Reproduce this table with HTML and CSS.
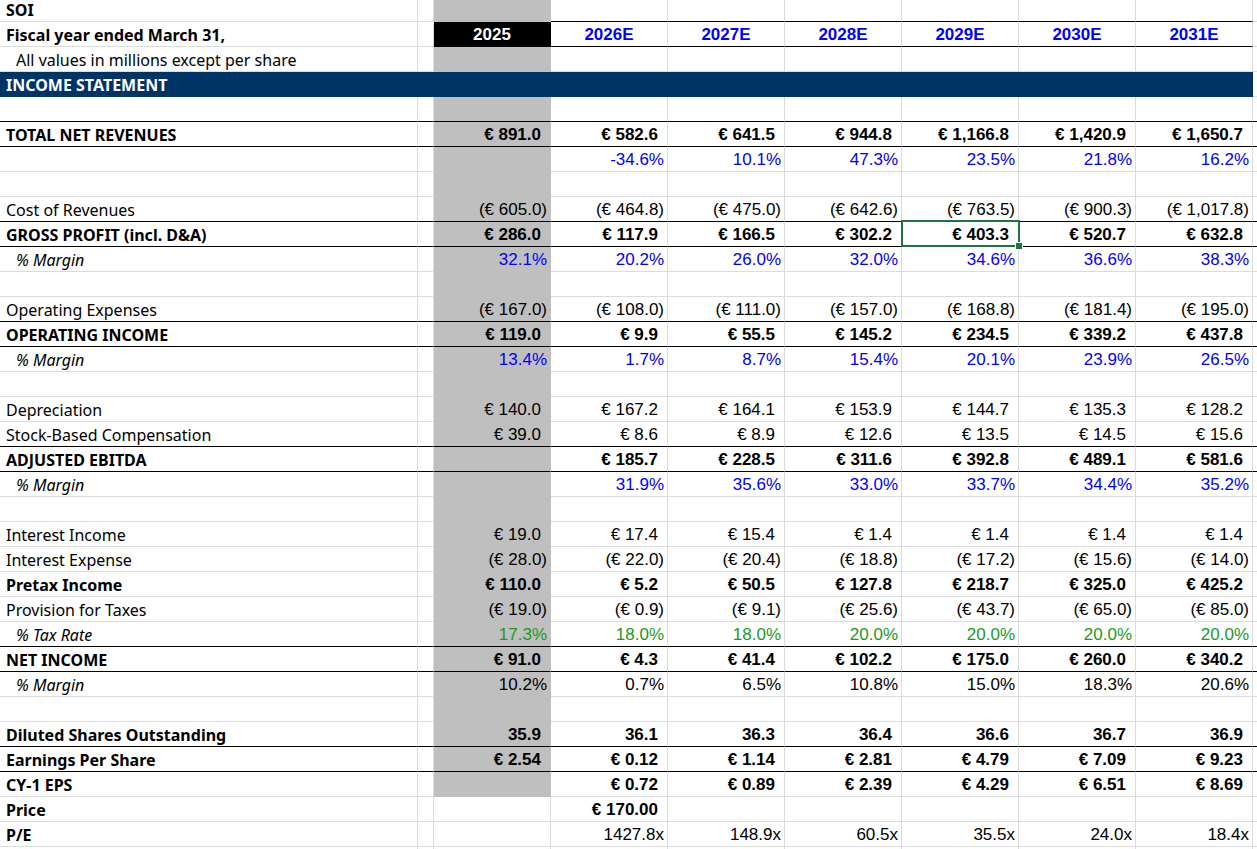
FILE: index.html
```html
<!DOCTYPE html>
<html>
<head>
<meta charset="utf-8">
<link rel="stylesheet" href="styles.css">
</head>
<body>
<table class="sheet">
<colgroup>
<col class="w-a"><col class="w-b"><col class="w-n"><col class="w-n"><col class="w-n"><col class="w-n"><col class="w-n"><col class="w-n"><col class="w-n"><col class="w-j">
</colgroup>
<tbody>
<tr class="r1 bold"><td class="a">SOI</td><td class="b"></td><td class="c"></td><td class="tb"></td><td class="tb"></td><td class="tb"></td><td class="tb"></td><td class="tb"></td><td class="tb"></td><td class="j"></td></tr>
<tr class="bold yr"><td class="a">Fiscal year ended March 31,</td><td class="b"></td><td class="c black">2025</td><td class="yb">2026E</td><td class="yb">2027E</td><td class="yb">2028E</td><td class="yb">2029E</td><td class="yb">2030E</td><td class="yb">2031E</td><td class="j"></td></tr>
<tr><td class="a ind">All values in millions except per share</td><td class="b"></td><td class="c"></td><td></td><td></td><td></td><td></td><td></td><td></td><td class="j"></td></tr>
<tr class="nav bold"><td class="a">INCOME STATEMENT</td><td class="b"></td><td class="c"></td><td></td><td></td><td></td><td></td><td></td><td></td><td class="j"></td></tr>
<tr class="ln"><td class="a"></td><td class="b"></td><td class="c"></td><td></td><td></td><td></td><td></td><td></td><td></td><td class="j"></td></tr>
<tr class="bold ln"><td class="a">TOTAL NET REVENUES</td><td class="b"></td><td class="c p">€ 891.0</td><td class="p">€ 582.6</td><td class="p">€ 641.5</td><td class="p">€ 944.8</td><td class="p">€ 1,166.8</td><td class="p">€ 1,420.9</td><td class="p">€ 1,650.7</td><td class="j"></td></tr>
<tr class="blue"><td class="a"></td><td class="b"></td><td class="c"></td><td>-34.6%</td><td>10.1%</td><td>47.3%</td><td>23.5%</td><td>21.8%</td><td>16.2%</td><td class="j"></td></tr>
<tr><td class="a"></td><td class="b"></td><td class="c"></td><td></td><td></td><td></td><td></td><td></td><td></td><td class="j"></td></tr>
<tr class="ln"><td class="a">Cost of Revenues</td><td class="b"></td><td class="c">(€ 605.0)</td><td>(€ 464.8)</td><td>(€ 475.0)</td><td>(€ 642.6)</td><td>(€ 763.5)</td><td>(€ 900.3)</td><td>(€ 1,017.8)</td><td class="j"></td></tr>
<tr class="bold ln"><td class="a">GROSS PROFIT (incl. D&amp;A)</td><td class="b"></td><td class="c p">€ 286.0</td><td class="p">€ 117.9</td><td class="p">€ 166.5</td><td class="p">€ 302.2</td><td class="p sel">€ 403.3</td><td class="p">€ 520.7</td><td class="p">€ 632.8</td><td class="j"></td></tr>
<tr class="blue"><td class="a ind it">% Margin</td><td class="b"></td><td class="c">32.1%</td><td>20.2%</td><td>26.0%</td><td>32.0%</td><td>34.6%</td><td>36.6%</td><td>38.3%</td><td class="j"></td></tr>
<tr><td class="a"></td><td class="b"></td><td class="c"></td><td></td><td></td><td></td><td></td><td></td><td></td><td class="j"></td></tr>
<tr class="ln"><td class="a">Operating Expenses</td><td class="b"></td><td class="c">(€ 167.0)</td><td>(€ 108.0)</td><td>(€ 111.0)</td><td>(€ 157.0)</td><td>(€ 168.8)</td><td>(€ 181.4)</td><td>(€ 195.0)</td><td class="j"></td></tr>
<tr class="bold ln"><td class="a">OPERATING INCOME</td><td class="b"></td><td class="c p">€ 119.0</td><td class="p">€ 9.9</td><td class="p">€ 55.5</td><td class="p">€ 145.2</td><td class="p">€ 234.5</td><td class="p">€ 339.2</td><td class="p">€ 437.8</td><td class="j"></td></tr>
<tr class="blue"><td class="a ind it">% Margin</td><td class="b"></td><td class="c">13.4%</td><td>1.7%</td><td>8.7%</td><td>15.4%</td><td>20.1%</td><td>23.9%</td><td>26.5%</td><td class="j"></td></tr>
<tr><td class="a"></td><td class="b"></td><td class="c"></td><td></td><td></td><td></td><td></td><td></td><td></td><td class="j"></td></tr>
<tr><td class="a">Depreciation</td><td class="b"></td><td class="c p">€ 140.0</td><td class="p">€ 167.2</td><td class="p">€ 164.1</td><td class="p">€ 153.9</td><td class="p">€ 144.7</td><td class="p">€ 135.3</td><td class="p">€ 128.2</td><td class="j"></td></tr>
<tr class="ln"><td class="a">Stock-Based Compensation</td><td class="b"></td><td class="c p">€ 39.0</td><td class="p">€ 8.6</td><td class="p">€ 8.9</td><td class="p">€ 12.6</td><td class="p">€ 13.5</td><td class="p">€ 14.5</td><td class="p">€ 15.6</td><td class="j"></td></tr>
<tr class="bold ln"><td class="a">ADJUSTED EBITDA</td><td class="b"></td><td class="c"></td><td class="p">€ 185.7</td><td class="p">€ 228.5</td><td class="p">€ 311.6</td><td class="p">€ 392.8</td><td class="p">€ 489.1</td><td class="p">€ 581.6</td><td class="j"></td></tr>
<tr class="blue"><td class="a ind it">% Margin</td><td class="b"></td><td class="c"></td><td>31.9%</td><td>35.6%</td><td>33.0%</td><td>33.7%</td><td>34.4%</td><td>35.2%</td><td class="j"></td></tr>
<tr><td class="a"></td><td class="b"></td><td class="c"></td><td></td><td></td><td></td><td></td><td></td><td></td><td class="j"></td></tr>
<tr><td class="a">Interest Income</td><td class="b"></td><td class="c p">€ 19.0</td><td class="p">€ 17.4</td><td class="p">€ 15.4</td><td class="p">€ 1.4</td><td class="p">€ 1.4</td><td class="p">€ 1.4</td><td class="p">€ 1.4</td><td class="j"></td></tr>
<tr><td class="a">Interest Expense</td><td class="b"></td><td class="c">(€ 28.0)</td><td>(€ 22.0)</td><td>(€ 20.4)</td><td>(€ 18.8)</td><td>(€ 17.2)</td><td>(€ 15.6)</td><td>(€ 14.0)</td><td class="j"></td></tr>
<tr class="bold"><td class="a">Pretax Income</td><td class="b"></td><td class="c p">€ 110.0</td><td class="p">€ 5.2</td><td class="p">€ 50.5</td><td class="p">€ 127.8</td><td class="p">€ 218.7</td><td class="p">€ 325.0</td><td class="p">€ 425.2</td><td class="j"></td></tr>
<tr><td class="a">Provision for Taxes</td><td class="b"></td><td class="c">(€ 19.0)</td><td>(€ 0.9)</td><td>(€ 9.1)</td><td>(€ 25.6)</td><td>(€ 43.7)</td><td>(€ 65.0)</td><td>(€ 85.0)</td><td class="j"></td></tr>
<tr class="green ln"><td class="a ind it">% Tax Rate</td><td class="b"></td><td class="c">17.3%</td><td>18.0%</td><td>18.0%</td><td>20.0%</td><td>20.0%</td><td>20.0%</td><td>20.0%</td><td class="j"></td></tr>
<tr class="bold ln"><td class="a">NET INCOME</td><td class="b"></td><td class="c p">€ 91.0</td><td class="p">€ 4.3</td><td class="p">€ 41.4</td><td class="p">€ 102.2</td><td class="p">€ 175.0</td><td class="p">€ 260.0</td><td class="p">€ 340.2</td><td class="j"></td></tr>
<tr><td class="a ind it">% Margin</td><td class="b"></td><td class="c">10.2%</td><td>0.7%</td><td>6.5%</td><td>10.8%</td><td>15.0%</td><td>18.3%</td><td>20.6%</td><td class="j"></td></tr>
<tr><td class="a"></td><td class="b"></td><td class="c"></td><td></td><td></td><td></td><td></td><td></td><td></td><td class="j"></td></tr>
<tr class="bold ln"><td class="a">Diluted Shares Outstanding</td><td class="b"></td><td class="c p">35.9</td><td class="p">36.1</td><td class="p">36.3</td><td class="p">36.4</td><td class="p">36.6</td><td class="p">36.7</td><td class="p">36.9</td><td class="j"></td></tr>
<tr class="bold ln"><td class="a">Earnings Per Share</td><td class="b"></td><td class="c p">€ 2.54</td><td class="p">€ 0.12</td><td class="p">€ 1.14</td><td class="p">€ 2.81</td><td class="p">€ 4.79</td><td class="p">€ 7.09</td><td class="p">€ 9.23</td><td class="j"></td></tr>
<tr class="bold"><td class="a">CY-1 EPS</td><td class="b"></td><td class="c"></td><td class="p">€ 0.72</td><td class="p">€ 0.89</td><td class="p">€ 2.39</td><td class="p">€ 4.29</td><td class="p">€ 6.51</td><td class="p">€ 8.69</td><td class="j"></td></tr>
<tr class="bold"><td class="a">Price</td><td class="b"></td><td></td><td class="p">€ 170.00</td><td></td><td></td><td></td><td></td><td></td><td class="j"></td></tr>
<tr><td class="a strong">P/E</td><td class="b"></td><td></td><td>1427.8x</td><td>148.9x</td><td>60.5x</td><td>35.5x</td><td>24.0x</td><td>18.4x</td><td class="j"></td></tr>
<tr><td class="a"></td><td class="b"></td><td></td><td></td><td></td><td></td><td></td><td></td><td></td><td class="j"></td></tr>
</tbody>
</table>
</body>
</html>
```
FILE: styles.css
```css
html, body {
  margin: 0;
  padding: 0;
  background: #ffffff;
  overflow: hidden;
}

.sheet {
  border-collapse: separate;
  border-spacing: 0;
  table-layout: fixed;
  width: 1273px;
  font-family: "Liberation Sans", Arial, sans-serif;
  font-size: 17px;
  color: #000000;
}

.w-a { width: 418px; }
.w-b { width: 16px; }
.w-n { width: 117px; }
.w-j { width: 20px; }

.sheet td {
  box-sizing: border-box;
  height: 25px;
  padding: 2px 3px 0 3px;
  line-height: 22px;
  border-right: 1px solid #dcdcdc;
  border-bottom: 1px solid #dcdcdc;
  text-align: right;
  white-space: nowrap;
  overflow: visible;
  vertical-align: top;
}

.sheet tr.r1 td {
  height: 22px;
  padding-top: 0;
  line-height: 21px;
}

.sheet td.a {
  text-align: left;
  padding-left: 6px;
  font-family: "Noto Sans", "Liberation Sans", sans-serif;
  font-size: 16px;
}

.sheet td.ind { padding-left: 16px; }
.sheet td.it { font-style: italic; }
.sheet td.strong { font-weight: 700; }

.sheet td.p { padding-right: 9px; }

.sheet td.c {
  background: #bfbfbf;
  border-right-color: #bfbfbf;
  border-bottom-color: #bfbfbf;
}

.bold td { font-weight: 700; }
.blue td { color: #0000ff; }
.green td { color: #1d9a1d; }
.blue td.a, .green td.a { color: #000000; }

.sheet tr.ln td { border-bottom-color: #000000; }
.sheet td.tb { border-bottom-color: #000000; }

.sheet td.black {
  background: #000000;
  color: #ffffff;
  text-align: center;
  border-bottom-color: #000000;
  border-right-color: #000000;
}

.sheet td.yb {
  color: #0000ff;
  text-align: center;
  border-bottom-color: #000000;
}

.sheet tr.nav td {
  background: #003366;
  border-right-color: #003366;
  border-bottom-color: #003366;
  color: #ffffff;
}
.sheet tr.nav td.j {
  background: #ffffff;
  border-right-color: #dcdcdc;
  border-bottom-color: #dcdcdc;
}

.sheet td.sel { position: relative; }
.sheet td.sel::after {
  content: "";
  position: absolute;
  left: -1px;
  top: -2px;
  right: -2px;
  bottom: -1px;
  border: 2px solid #217346;
}
.sheet td.sel::before {
  content: "";
  position: absolute;
  right: -5px;
  bottom: -4px;
  width: 6px;
  height: 6px;
  background: #217346;
  border: 1px solid #ffffff;
  z-index: 2;
}
```
